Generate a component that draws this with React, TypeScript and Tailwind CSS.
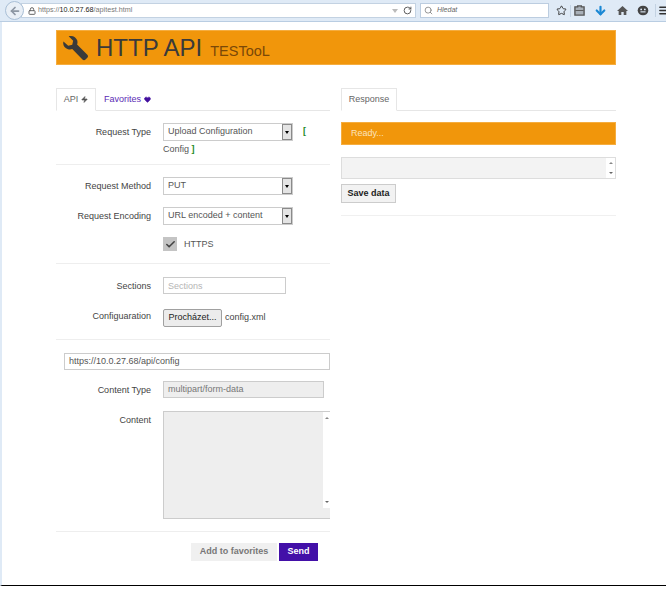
import { Check, Star, Search, RotateCw, Lock, ArrowLeft, Menu, ArrowDown, Heart, Zap } from "lucide-react";

function FakeSelect({ value }: { value: string }) {
  return (
    <div className="w-[130px] h-[18px] flex items-center justify-between border border-[#cccccc] bg-white pl-1 text-[9px] text-[#555555] shrink-0">
      <span>{value}</span>
      <span className="h-[16px] w-[10px] flex items-center justify-center border border-[#8a8a8a] bg-[#e4e4e4]">
        <span className="border-x-[2.5px] border-t-[3px] border-x-transparent border-t-black" />
      </span>
    </div>
  );
}

function Row({ label, children, className, labelTop = "pt-[3px]" }: { label: string; children: React.ReactNode; className?: string; labelTop?: string }) {
  return (
    <div className={`flex gap-3 ${className ?? ""}`}>
      <div className={`w-[95px] shrink-0 ${labelTop} text-right text-[9px] text-[#444444]`}>{label}</div>
      {children}
    </div>
  );
}

function Toolbar() {
  return (
    <div className="h-[22px] flex items-center border-b border-[#b9cde2] bg-[#dfeaf6] pl-[5px]">
      <div className="z-10 h-[19px] w-[19px] shrink-0 flex items-center justify-center rounded-full border border-[#a9bfd6] bg-[#e9eff6]">
        <ArrowLeft size={12} strokeWidth={3.5} className="text-[#8d97a3]" />
      </div>
      <div className="h-[15px] w-[395px] shrink-0 -ml-[3px] flex items-center border border-[#c3d2e2] bg-white pl-[6px] pr-[3px]">
        <Lock size={8} strokeWidth={3} className="text-[#666666]" />
        <span className="ml-[2px] text-[7.2px] text-[#777777]">
          https://<span className="text-[#222222]">10.0.27.68</span>/apitest.html
        </span>
        <span className="flex-1" />
        <span className="border-x-[3px] border-t-[4px] border-x-transparent border-t-[#bbbbbb]" />
        <RotateCw size={9} strokeWidth={2.5} className="ml-[5px] text-[#555555]" />
      </div>
      <div className="ml-[4px] h-[15px] w-[129px] shrink-0 flex items-center border border-[#bccde0] bg-white pl-[3px]">
        <Search size={9} className="text-[#777777]" />
        <span className="ml-[4px] text-[7px] italic text-[#666666]">Hledat</span>
      </div>
      <div className="ml-[3px] flex items-center shrink-0">
        <span className="w-[18px] flex justify-center">
          <Star size={11} strokeWidth={2} className="text-[#333333]" />
        </span>
        <span className="h-[12px] w-px bg-[#c3d2e2]" />
        <span className="w-[16px] flex justify-center">
          <svg viewBox="0 0 12 12" className="h-[11px] w-[11px]">
            <path d="M4 2V1h4v1h3v9H1V2z" fill="#a9b0b8" stroke="#555555" strokeWidth="1.500" />
            <path d="M1.500 6h9" stroke="#555555" />
          </svg>
        </span>
        <span className="w-[26px] flex justify-center">
          <ArrowDown size={13} strokeWidth={4} className="text-[#1b88d4]" />
        </span>
        <span className="w-[18px] flex justify-center">
          <svg viewBox="0 0 12 12" className="h-[11px] w-[11px]" fill="#555555">
            <path d="M6 1 12 6.500H10.200V11H7.300V7.500H4.700V11H1.800V6.500H0z" />
          </svg>
        </span>
        <span className="w-[24px] flex justify-center">
          <svg viewBox="0 0 12 12" className="h-[11px] w-[12px]">
            <ellipse cx="6" cy="6" rx="5.800" ry="5.300" fill="#444444" />
            <circle cx="4" cy="4.800" r="1" fill="#dfeaf6" />
            <circle cx="8" cy="4.800" r="1" fill="#dfeaf6" />
            <path d="M3.200 7.500h5.600" stroke="#dfeaf6" strokeWidth="1.200" />
          </svg>
        </span>
        <span className="h-[13px] w-px bg-[#c3d2e2]" />
        <span className="w-[14px] flex justify-center shrink-0">
          <Menu size={11} strokeWidth={3} className="text-[#333333]" />
        </span>
      </div>
    </div>
  );
}

export default function App() {
  return (
    <div className="h-[590px] w-[666px] overflow-hidden bg-white font-['Liberation_Sans',Arial,sans-serif]">
      <Toolbar />
      <div className="h-[564px] border-b border-black border-l-2 border-l-[#dfeaf6] pl-[54px] pr-[50px] pt-[8px]">
        <div className="h-[35px] flex items-center border border-[#f5ad3f] bg-[#f1960b] pl-[4px] text-[#3a3a3a]">
          <svg viewBox="0 0 24 24" className="h-[27px] w-[27px]" fill="#3a3a3a">
            <path d="M2.2 6.6 6.4 10.4 10 9.6 10.8 6 6.800 2.100C10 .8 13.4 2.6 14.4 5.6c.4 1.3.3 2.6-.1 3.7L23.4 18.400c.8.8.8 1.900 0 2.700l-1.600 1.600c-.8.8-1.900.8-2.700 0L10 13.400c-1.200.5-2.500.5-3.800.1C3.200 12.500 1.200 9.700 2.200 6.600z" />
          </svg>
          <div className="ml-[8px] flex items-baseline">
            <span className="text-[24px] leading-none">HTTP API</span>
            <span className="ml-[8px] text-[14.5px] leading-none text-[#7a4808]">TESTooL</span>
          </div>
        </div>

        <div className="mt-[23px] flex gap-[11px]">
          <div className="w-[274px] shrink-0">
            <div className="h-[23px] flex items-end border-b border-[#e6e6e6] text-[9px]">
              <div className="h-[23px] -mb-px w-[40px] flex items-center justify-center gap-[3px] border border-b-white border-[#e6e6e6] bg-white text-[#666666]">
                API <Zap size={7} fill="#555555" className="text-[#555555]" />
              </div>
              <div className="h-[23px] -mb-px flex items-center gap-[3px] pl-[8px] text-[#5b2bb5]">
                Favorites <Heart size={7} fill="#43109f" className="text-[#43109f]" />
              </div>
            </div>

            <div className="border-b border-[#eeeeee] pt-[12px] pb-[8px]">
              <Row label="Request Type">
                <div className="w-[167px] text-[9px] text-[#555555]">
                  <div className="flex items-center gap-[10px]">
                    <FakeSelect value="Upload Configuration" />
                    <span className="font-bold text-[#1f8a1f]">[</span>
                  </div>
                  <div className="mt-[1px] leading-[14px]">
                    Config <span className="font-bold text-[#1f8a1f]">]</span>
                  </div>
                </div>
              </Row>
            </div>

            <div className="flex flex-col gap-[12px] border-b border-[#eeeeee] py-[12px]">
              <Row label="Request Method"><FakeSelect value="PUT" /></Row>
              <Row label="Request Encoding"><FakeSelect value="URL encoded + content" /></Row>
              <div className="h-[14px] flex items-center pl-[107px]">
                <span className="h-[14px] w-[14px] flex items-center justify-center bg-[#c4c4c4]">
                  <Check size={11} strokeWidth={3.5} className="text-[#444444]" />
                </span>
                <span className="ml-[7px] h-[14px] text-[9px] leading-[15px] text-[#555555]">HTTPS</span>
              </div>
            </div>

            <div className="border-b border-[#eeeeee] pt-[13px] pb-[12px]">
              <Row label="Sections">
                <input
                  readOnly
                  placeholder="Sections"
                  className="h-[17px] w-[123px] border border-[#cccccc] bg-white px-[4px] text-[9px] placeholder:text-[#b5b5b5]"
                />
              </Row>
              <Row label="Configuaration" className="mt-[15px]" labelTop="pt-[1px]">
                <div className="flex items-center">
                  <span className="h-[18px] w-[59px] flex items-center justify-center rounded-[2px] border border-[#a0a0a0] bg-[#ececec] text-[9px] text-[#222222]">Procházet...</span>
                  <span className="ml-[3px] text-[9px] text-[#444444]">config.xml</span>
                </div>
              </Row>
            </div>

            <div className="border-b border-[#eeeeee] pt-[13px] pb-[12px]">
              <div className="ml-[8px] h-[17px] flex items-center border border-[#cccccc] bg-white px-[4px] text-[9px] text-[#555555]">
                https://10.0.27.68/api/config
              </div>
              <Row label="Content Type" className="mt-[11px]">
                <div className="h-[17px] w-[161px] flex items-center border border-[#cccccc] bg-[#eeeeee] px-[4px] text-[9px] text-[#777777]">
                  multipart/form-data
                </div>
              </Row>
              <Row label="Content" className="mt-[13px]">
                <div className="h-[108px] flex-1 flex justify-end border border-r-0 border-[#cccccc] bg-[#eeeeee]">
                  <div className="h-[96px] w-[7px] flex flex-col items-center justify-between bg-white py-[5px]">
                    <span className="border-x-[2px] border-b-[2px] border-x-transparent border-b-[#888888]" />
                    <span className="border-x-[2px] border-t-[2px] border-x-transparent border-t-[#666666]" />
                  </div>
                </div>
              </Row>
            </div>

            <div className="mt-[11px] flex justify-end gap-[2px] pr-[12px]">
              <span className="h-[18px] w-[86px] flex items-center justify-center bg-[#f0f0f0] text-[9px] font-bold text-[#777777]">Add to favorites</span>
              <span className="h-[18px] w-[39px] flex items-center justify-center bg-[#4310a8] text-[9px] font-bold text-white">Send</span>
            </div>
          </div>

          <div className="w-[275px] shrink-0">
            <div className="h-[23px] flex items-end border-b border-[#e6e6e6] text-[9px]">
              <div className="h-[23px] -mb-px w-[56px] flex items-center justify-center border border-b-white border-[#e6e6e6] bg-white text-[#666666]">Response</div>
            </div>
            <div className="mt-[11px] h-[23px] flex items-center border border-[#f5ad3f] bg-[#f1960b] pl-[9px] text-[9px] text-[#fbe3bd]">Ready...</div>
            <div className="mt-[12px] h-[22px] flex justify-end border border-[#dddddd] bg-[#f3f3f3]">
              <div className="w-[9px] flex flex-col items-center justify-between bg-white py-[4px]">
                <span className="border-x-[2px] border-b-[2px] border-x-transparent border-b-[#888888]" />
                <span className="border-x-[2px] border-t-[2px] border-x-transparent border-t-[#666666]" />
              </div>
            </div>
            <div className="mt-[5px] h-[19px] w-[55px] flex items-center justify-center border border-[#cccccc] bg-[#f2f2f2] text-[9px] font-bold text-[#222222]">Save data</div>
            <div className="mt-[12px] h-px bg-[#f0f0f0]" />
          </div>
        </div>
      </div>
    </div>
  );
}
